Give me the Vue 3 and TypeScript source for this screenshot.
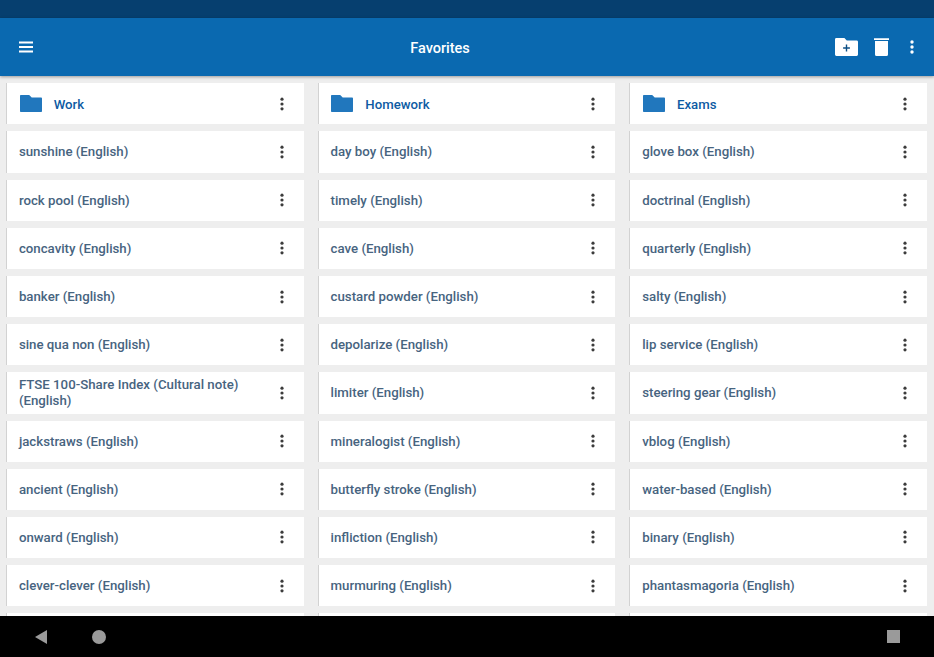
<script setup lang="ts">
const folders: string[] = ['Work', 'Homework', 'Exams']
const words: string[][] = [
  ['sunshine', 'day boy', 'glove box'],
  ['rock pool', 'timely', 'doctrinal'],
  ['concavity', 'cave', 'quarterly'],
  ['banker', 'custard powder', 'salty'],
  ['sine qua non', 'depolarize', 'lip service'],
  ['FTSE 100-Share Index (Cultural note)', 'limiter', 'steering gear'],
  ['jackstraws', 'mineralogist', 'vblog'],
  ['ancient', 'butterfly stroke', 'water-based'],
  ['onward', 'infliction', 'binary'],
  ['clever-clever', 'murmuring', 'phantasmagoria'],
]
</script>

<template>
  <div class="screen">
    <div class="status"></div>
    <header class="bar">
      <svg class="menu" width="24" height="24" viewBox="0 0 24 24"><path d="M5 6.6h14v2H5zM5 11h14v2H5zM5 15.4h14v2H5z" fill="#fff" /></svg>
      <h1 class="title">Favorites</h1>
      <div class="actions">
        <svg class="act-folder" width="23" height="18" viewBox="0 0 23 18">
          <path d="M1.4 0h8l2.4 2.4h9.8A1.4 1.4 0 0 1 23 3.8v12.8a1.4 1.4 0 0 1-1.4 1.4H1.4A1.4 1.4 0 0 1 0 16.6V1.4A1.4 1.4 0 0 1 1.4 0z" fill="#fff" />
          <path d="M10.8 6.6h1.4v2.7h2.7v1.4h-2.7v2.7h-1.4v-2.7H8.1V9.3h2.7z" fill="#0d4f85" />
        </svg>
        <svg class="act-trash" width="15" height="18" viewBox="0 0 15 18">
          <path d="M0 0.3h15v1.6H0zM1 3h13v13.4a1.6 1.6 0 0 1-1.6 1.6H2.6A1.6 1.6 0 0 1 1 16.4z" fill="#fff" />
        </svg>
        <svg class="act-more" width="4" height="14" viewBox="0 0 4 14"><circle cx="2" cy="2" r="1.7" fill="#fff" /><circle cx="2" cy="7" r="1.7" fill="#fff" /><circle cx="2" cy="12" r="1.7" fill="#fff" /></svg>
      </div>
    </header>
    <main class="list">
      <div v-for="f in folders" :key="f" class="card folder">
        <svg class="folder-icon" width="22" height="17" viewBox="0 0 22 17"><path d="M.8 0h8.4l2.5 2.6h9.5a.8.8 0 0 1 .8.8v12.8a.8.8 0 0 1-.8.8H.8a.8.8 0 0 1-.8-.8V.8A.8.8 0 0 1 .8 0z" fill="#2177bd" /></svg>
        <span class="folder-name">{{ f }}</span>
        <svg class="more" width="4" height="14" viewBox="0 0 4 14"><circle cx="2" cy="2.2" r="1.6" /><circle cx="2" cy="7" r="1.6" /><circle cx="2" cy="11.8" r="1.6" /></svg>
      </div>
      <template v-for="row in words" :key="row[0]">
        <div v-for="w in row" :key="w" class="card">
          <span class="word">{{ w }} (English)</span>
          <svg class="more" width="4" height="14" viewBox="0 0 4 14"><circle cx="2" cy="2.2" r="1.6" /><circle cx="2" cy="7" r="1.6" /><circle cx="2" cy="11.8" r="1.6" /></svg>
        </div>
      </template>
      <div v-for="n in 3" :key="n" class="card"></div>
    </main>
    <nav class="sysnav">
      <svg class="back" width="14" height="16" viewBox="0 0 14 16"><path d="M13 1v14L1 8z" fill="#9a9a9a" /></svg>
      <span class="home"></span>
      <span class="recent"></span>
    </nav>
  </div>
</template>

<style scoped>
.screen {
  width: 934px;
  height: 657px;
  display: flex;
  flex-direction: column;
  overflow: hidden;
  background: #eeeeee;
  font-family: Roboto, "Liberation Sans", sans-serif;
}
.status {
  height: 18px;
  flex: none;
  background: #063f6f;
}
.bar {
  height: 58px;
  flex: none;
  display: flex;
  align-items: center;
  position: relative;
  background: #0a69b0;
  box-shadow: 0 1px 3px rgba(0, 0, 0, 0.35);
  z-index: 1;
}
.menu {
  margin-left: 14px;
}
.title {
  position: absolute;
  left: 0;
  top: 22px;
  width: 880px;
  margin: 0;
  text-align: center;
  color: #fff;
  font-size: 14.5px;
  line-height: 17px;
  font-weight: 500;
}
.actions {
  margin-left: auto;
  display: flex;
  align-items: center;
  padding-right: 20px;
}
.act-folder {
  margin-right: 16px;
}
.act-trash {
  margin-right: 21px;
}
.list {
  flex: 1;
  min-height: 0;
  overflow: hidden;
  display: grid;
  grid-template-columns: repeat(3, 1fr);
  grid-auto-rows: 41.2px;
  column-gap: 14px;
  row-gap: 7px;
  padding: 7.2px 7px 0 6px;
  align-content: start;
}
.card {
  display: flex;
  align-items: center;
  min-width: 0;
  background: #fff;
  border-left: 1px solid #d2d2d2;
  padding: 0 20px 0 11.9px;
}
.folder-icon {
  flex: none;
  margin-left: 0.8px;
  margin-right: 12px;
}
.folder-name {
  flex: 1;
  color: #0d5ba3;
  font-size: 13.2px;
  font-weight: 500;
  padding-top: 1px;
}
.word {
  flex: 1;
  min-width: 0;
  padding-right: 24px;
  padding-top: 1px;
  color: #47647f;
  font-size: 13.25px;
  font-weight: 500;
  line-height: 16px;
}
.more {
  flex: none;
  fill: #3c3c3c;
}
.sysnav {
  height: 41px;
  flex: none;
  display: flex;
  align-items: center;
  background: #000;
  position: relative;
  z-index: 2;
}
.back {
  margin-left: 34px;
}
.home {
  width: 14px;
  height: 14px;
  border-radius: 50%;
  background: #9a9a9a;
  margin-left: 44px;
}
.recent {
  width: 13px;
  height: 13px;
  background: #9a9a9a;
  margin-left: auto;
  margin-right: 34px;
}
</style>
